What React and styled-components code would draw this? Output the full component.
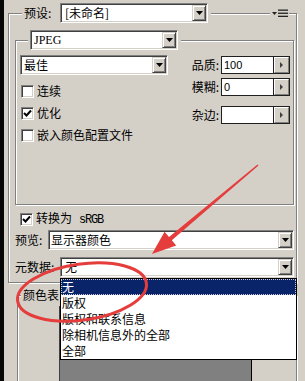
import React from "react"
import styled, { createGlobalStyle } from "styled-components"

const GlobalStyle = createGlobalStyle`
  html, body {
    margin: 0;
    padding: 0;
    background: #d4d0c8;
  }
  body {
    font-family: "Noto Sans CJK SC", "Liberation Sans", sans-serif;
    font-size: 12px;
    color: #000;
  }
  * {
    box-sizing: border-box;
  }
`

const Screen = styled.div`
  position: relative;
  width: 305px;
  height: 381px;
  overflow: hidden;
  display: flex;
  background: #d4d0c8;
`

const Edge = styled.div`
  flex: none;
  width: 4px;
  background: #060606;
`

const Panel = styled.div`
  flex: 1;
  display: flex;
  flex-direction: column;
  padding: 3px 8px 0 4px;
  min-width: 0;
`

const Frame = styled.div`
  position: relative;
  flex: none;
`

const Group = styled.fieldset`
  flex: none;
  margin: ${({ $margin }) => $margin || 0};
  padding: ${({ $pad }) => $pad};
  border: 1px solid #808080;
  box-shadow: 1px 1px 0 #fff, inset 1px 1px 0 #fff;
  min-inline-size: 0;
`

const Legend = styled.legend`
  margin-left: ${({ $offset }) => $offset}px;
  padding: 0 3px 0 2px;
  background: #d4d0c8;
  line-height: 14px;
`

const LegendRow = styled.div`
  display: flex;
  align-items: center;
`

const MenuIcon = styled.div`
  position: absolute;
  top: 6px;
  left: 262px;
  width: 19px;
  height: 9px;
  background: #d4d0c8;
  display: flex;
  align-items: center;
  justify-content: center;
`

const Label = styled.span`
  display: inline-block;
  flex: none;
  width: ${({ $w }) => ($w ? `${$w}px` : "auto")};
  text-align: ${({ $align }) => $align || "left"};
  line-height: 16px;
  white-space: nowrap;
`

const Combo = styled.div`
  flex: none;
  display: flex;
  width: ${({ $w }) => $w}px;
  height: 20px;
  padding: 1px;
  background: #fff;
  border: 1px solid;
  border-color: #808080 #fff #fff #808080;
  box-shadow: inset 1px 1px 0 #404040, inset -1px -1px 0 #d4d0c8;
`

const ComboValue = styled.span`
  flex: 1;
  min-width: 0;
  padding-left: ${({ $indent }) => $indent ?? 2}px;
  line-height: 16px;
  white-space: nowrap;
  overflow: hidden;
  font-family: ${({ $serif }) =>
    $serif ? '"Liberation Serif", serif' : '"Noto Sans CJK SC", sans-serif'};
`

const DropButton = styled.span`
  flex: none;
  width: 14px;
  height: 16px;
  display: flex;
  align-items: center;
  justify-content: center;
  background: #d4d0c8;
  border: 1px solid;
  border-color: #d4d0c8 #404040 #404040 #d4d0c8;
  box-shadow: inset 1px 1px 0 #fff, inset -1px -1px 0 #808080;
`

const Spin = styled.div`
  display: flex;
  height: 18px;
  border: 1px solid #202020;
`

const SpinInput = styled.span`
  width: 52px;
  background: #fff;
  border-right: 1px solid #202020;
  padding-left: 2px;
  line-height: 16px;
  font-family: "Liberation Sans", sans-serif;
  font-size: 11px;
`

const SpinButton = styled.span`
  width: 15px;
  display: flex;
  align-items: center;
  justify-content: center;
  background: #d4d0c8;
  border: 1px solid;
  border-color: #fff #808080 #808080 #fff;
`

const Inner = styled.div`
  display: flex;
  justify-content: space-between;
`

const Column = styled.div`
  display: flex;
  flex-direction: column;
  align-items: ${({ $end }) => ($end ? "flex-end" : "flex-start")};
  margin-top: ${({ $top }) => $top || 0}px;
`

const FieldRow = styled.div`
  display: flex;
  align-items: center;
  gap: ${({ $gap }) => $gap || 0}px;
  margin-top: ${({ $top }) => $top || 0}px;
`

const CheckRow = styled.div`
  display: flex;
  align-items: center;
  gap: 3px;
  height: 22px;
  margin-left: ${({ $left }) => $left || 0}px;
  margin-top: ${({ $top }) => $top || 0}px;
  line-height: 16px;
  white-space: nowrap;
`

const Box = styled.span`
  flex: none;
  width: 13px;
  height: 13px;
  display: flex;
  align-items: center;
  justify-content: center;
  background: #fff;
  border: 1px solid;
  border-color: #808080 #fff #fff #808080;
  box-shadow: inset 1px 1px 0 #404040, inset -1px -1px 0 #d4d0c8;
`

const Mono = styled.span`
  font-family: "Liberation Mono", monospace;
  font-size: 12px;
  letter-spacing: -1.2px;
  margin-left: 7px;
`

const Swatches = styled.div`
  width: 193px;
  height: 90px;
  margin: 4px 0 0 41px;
  background: #808080;
  border: 1px solid;
  border-color: #404040 #000 #000 #404040;
`

const DropList = styled.ul`
  position: absolute;
  left: 60px;
  top: 278px;
  width: 237px;
  margin: 0;
  padding: 0;
  list-style: none;
  background: #fff;
  border: 1px solid #000;
`

const DropItem = styled.li`
  height: 16px;
  line-height: 16px;
  padding-left: 1px;
  white-space: nowrap;
  color: ${({ $active }) => ($active ? "#fff" : "#000")};
  background: ${({ $active }) => ($active ? "#0a246a" : "transparent")};
  outline: ${({ $active }) => ($active ? "1px dotted #c8c8d8" : "none")};
  outline-offset: -1px;
`

const Annotations = styled.svg`
  position: absolute;
  top: 0;
  left: 0;
  pointer-events: none;
`

const DownArrow = () => (
  <svg width="7" height="4" viewBox="0 0 7 4">
    <polygon points="0,0 7,0 3.5,4" fill="#000" />
  </svg>
)

const RightArrow = () => (
  <svg width="3" height="6" viewBox="0 0 3 6">
    <polygon points="0,0 3,3 0,6" fill="#404040" />
  </svg>
)

const Tick = () => (
  <svg width="9" height="9" viewBox="0 0 9 9">
    <path d="M1 4 L3.5 6.5 L8 1.5" fill="none" stroke="#000" strokeWidth="2" />
  </svg>
)

const Select = ({ width, value, serif, indent }) => (
  <Combo $w={width}>
    <ComboValue $serif={serif} $indent={indent}>{value}</ComboValue>
    <DropButton>
      <DownArrow />
    </DropButton>
  </Combo>
)

const Check = ({ checked, children, left, top }) => (
  <CheckRow $left={left} $top={top}>
    <Box>{checked && <Tick />}</Box>
    <span>{children}</span>
  </CheckRow>
)

const SpinField = ({ label, value, top }) => (
  <FieldRow $gap={2} $top={top}>
    <Label>{label}</Label>
    <Spin>
      <SpinInput>{value}</SpinInput>
      <SpinButton>
        <RightArrow />
      </SpinButton>
    </Spin>
  </FieldRow>
)

const metaOptions = ["无", "版权", "版权和联系信息", "除相机信息外的全部", "全部"]

const App = () => (
  <>
    <GlobalStyle />
    <Screen>
      <Edge />
      <Panel>
        <Frame>
          <Group $pad="7px 2px 5px 6px">
            <Legend $offset={7}>
              <LegendRow>
                <Label $w={36}>预设:</Label>
                <Select width={148} value="[未命名]" indent={3} />
              </LegendRow>
            </Legend>

            <Group $pad="5px 3px 58px 4px">
              <Legend $offset={8}>
                <LegendRow>
                  <Select width={148} value="JPEG" serif />
                </LegendRow>
              </Legend>
              <Inner>
                <Column>
                  <Select width={148} value="最佳" />
                  <Check left={1} top={5}>连续</Check>
                  <Check left={1} checked>优化</Check>
                  <Check left={1}>嵌入颜色配置文件</Check>
                </Column>
                <Column $end $top={1}>
                  <SpinField label="品质:" value="100" />
                  <SpinField label="模糊:" value="0" top={4} />
                  <SpinField label="杂边:" value="" top={10} />
                </Column>
              </Inner>
            </Group>

            <Check left={5} top={3} checked>
              转换为<Mono>sRGB</Mono>
            </Check>
            <FieldRow>
              <Label $w={33}>预览:</Label>
              <Select width={246} value="显示器颜色" indent={1} />
            </FieldRow>
            <FieldRow $top={7}>
              <Label $w={45}>元数据:</Label>
              <Select width={234} value="无" indent={3} />
            </FieldRow>
          </Group>
          <MenuIcon>
            <svg width="17" height="9" viewBox="0 0 17 9">
              <polygon points="1,3 6,3 3.5,6" fill="#222" />
              <rect x="7" y="0.5" width="10" height="1.3" fill="#222" />
              <rect x="7" y="3.6" width="10" height="1.3" fill="#222" />
              <rect x="7" y="6.7" width="10" height="1.3" fill="#222" />
            </svg>
          </MenuIcon>
        </Frame>

        <Group $margin="5px 0 0 9px" $pad="0">
          <Legend $offset={3}>颜色表</Legend>
          <Swatches />
        </Group>
      </Panel>

      <DropList>
        {metaOptions.map((option, i) => (
          <DropItem key={option} $active={i === 0}>
            {option}
          </DropItem>
        ))}
      </DropList>

      <Annotations width="305" height="381" viewBox="0 0 305 381">
        <ellipse
          cx="82"
          cy="292"
          rx="65"
          ry="28"
          transform="rotate(-8 82 292)"
          fill="none"
          stroke="#e53c3c"
          strokeWidth="3"
        />
        <polygon
          points="257.5,164.4 258.5,165.6 171.8,240.3 176.2,245.5 152,254 164.6,231.7 169,236.9"
          fill="#e53c3c"
        />
      </Annotations>
    </Screen>
  </>
)

export default App
